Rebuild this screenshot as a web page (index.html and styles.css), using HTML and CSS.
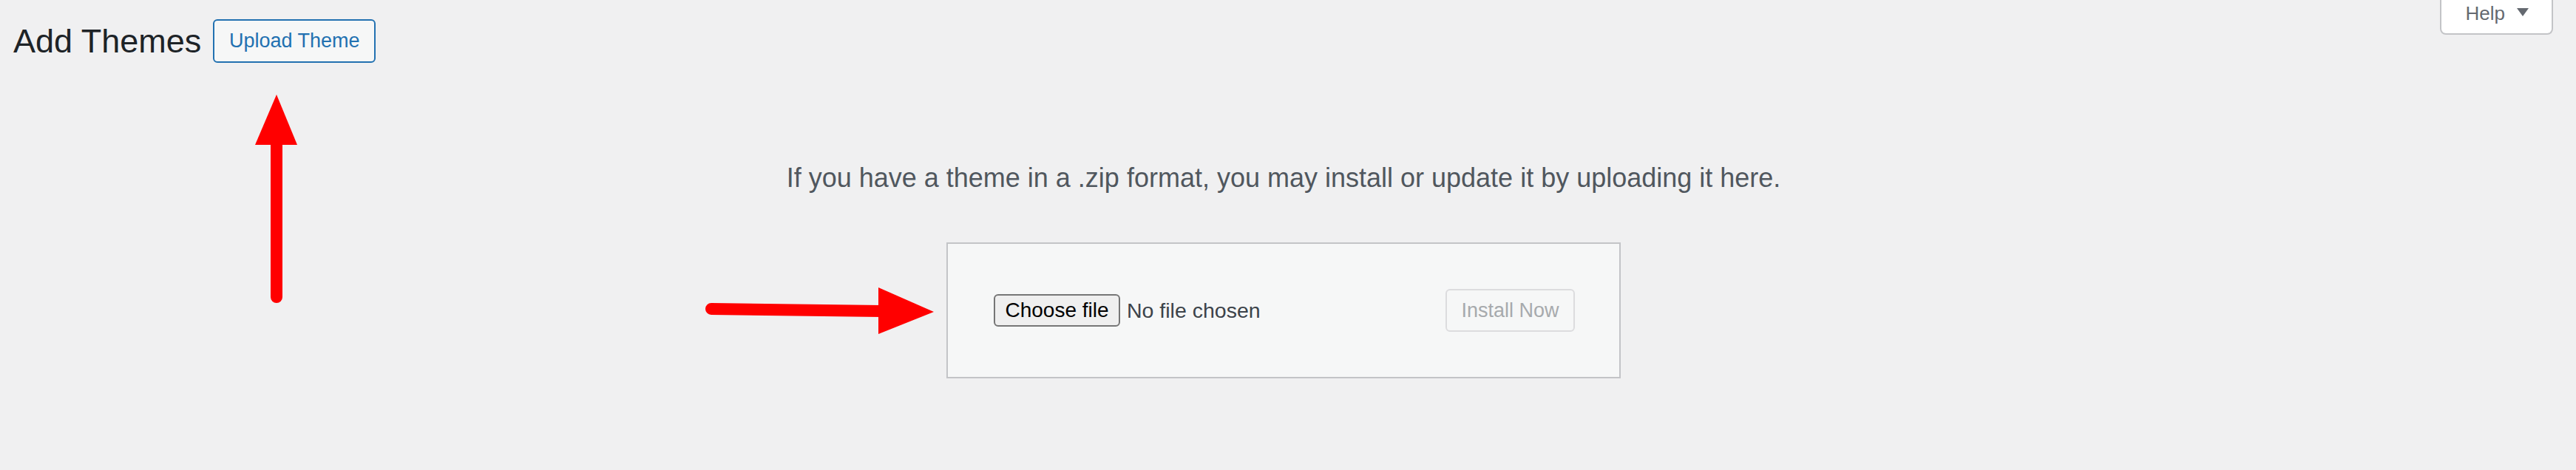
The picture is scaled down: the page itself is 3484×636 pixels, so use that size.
FILE: index.html
```html
<!DOCTYPE html>
<html lang="en">
<head>
<meta charset="utf-8">
<title>Add Themes</title>
<link rel="stylesheet" href="styles.css">
</head>
<body>
<div class="screen-meta-links">
  <button class="help-tab" type="button"><span class="help-label">Help</span><span class="caret"></span></button>
</div>
<div class="wrap">
  <div class="title-row">
    <h1 class="page-title">Add Themes</h1>
    <a class="page-title-action" href="#">Upload Theme</a>
  </div>
  <div class="upload-theme">
    <p class="install-help">If you have a theme in a .zip format, you may install or update it by uploading it here.</p>
    <form class="upload-form">
      <div class="file-field">
        <button class="choose-file" type="button">Choose file</button>
        <span class="file-status">No file chosen</span>
      </div>
      <button class="install-now" type="button" disabled>Install Now</button>
    </form>
  </div>
</div>
<svg class="annotations" width="1300" height="470" viewBox="0 0 1300 470" aria-hidden="true">
  <polygon points="374,128 345,196 402,196" fill="#ff0000"/>
  <line x1="374" y1="194" x2="374" y2="402" stroke="#ff0000" stroke-width="16" stroke-linecap="round"/>
  <line x1="962" y1="418" x2="1192" y2="421" stroke="#ff0000" stroke-width="16" stroke-linecap="round"/>
  <polygon points="1188,389 1188,452 1263,422" fill="#ff0000"/>
</svg>
</body>
</html>
```
FILE: styles.css
```css
html, body {
  margin: 0;
  padding: 0;
}

body {
  position: relative;
  background: #f0f0f1;
  font-family: "Liberation Sans", Arial, sans-serif;
  color: #3c434a;
  width: 3484px;
  height: 636px;
  overflow: hidden;
}

.screen-meta-links {
  float: right;
  margin-right: 31px;
}

.help-tab {
  display: flex;
  align-items: flex-start;
  box-sizing: border-box;
  height: 47px;
  padding: 3px 31px 0 33px;
  border: 2px solid #c3c4c7;
  border-top: none;
  border-radius: 0 0 8px 8px;
  background: #ffffff;
  color: #646970;
  font-family: "Liberation Sans", Arial, sans-serif;
  font-size: 26px;
  line-height: 30px;
  cursor: pointer;
}

.caret {
  width: 0;
  height: 0;
  margin: 8px 0 0 16px;
  border-left: 8px solid transparent;
  border-right: 8px solid transparent;
  border-top: 11px solid #646970;
}

.title-row {
  display: flex;
  align-items: center;
  padding: 26px 0 0 18px;
}

.page-title {
  margin: 0 16px 0 0;
  font-size: 45px;
  font-weight: 400;
  line-height: 59px;
  color: #1d2327;
}

.page-title-action {
  display: inline-flex;
  align-items: center;
  justify-content: center;
  box-sizing: border-box;
  width: 220px;
  height: 59px;
  padding: 0;
  border: 2px solid #2271b1;
  border-radius: 6px;
  background: #f6f7f7;
  color: #2271b1;
  font-size: 27px;
  text-decoration: none;
}

.upload-theme {
  padding-right: 12px;
  text-align: center;
}

.install-help {
  margin: 132px 0 0;
  font-size: 36px;
  line-height: 47px;
  color: #50575e;
}

.upload-form {
  display: flex;
  align-items: center;
  justify-content: space-between;
  box-sizing: border-box;
  width: 912px;
  margin: 64px auto 0;
  padding: 61px 60px 61px 62px;
  border: 2px solid #c3c4c7;
  background: #f6f7f7;
}

.file-field {
  display: flex;
  align-items: center;
}

.choose-file {
  box-sizing: border-box;
  width: 171px;
  height: 44px;
  padding: 0;
  border: 2px solid #767676;
  border-radius: 6px;
  background: #efefef;
  color: #000000;
  font-family: "Liberation Sans", Arial, sans-serif;
  font-size: 28px;
}

.file-status {
  margin-left: 9px;
  font-size: 28.5px;
  color: #3c434a;
}

.install-now {
  box-sizing: border-box;
  width: 175px;
  height: 58px;
  padding: 0;
  border: 2px solid #dcdcde;
  border-radius: 6px;
  background: #f6f7f7;
  color: #a7aaad;
  font-family: "Liberation Sans", Arial, sans-serif;
  font-size: 27px;
}

.annotations {
  position: absolute;
  top: 0;
  left: 0;
  pointer-events: none;
}
```
